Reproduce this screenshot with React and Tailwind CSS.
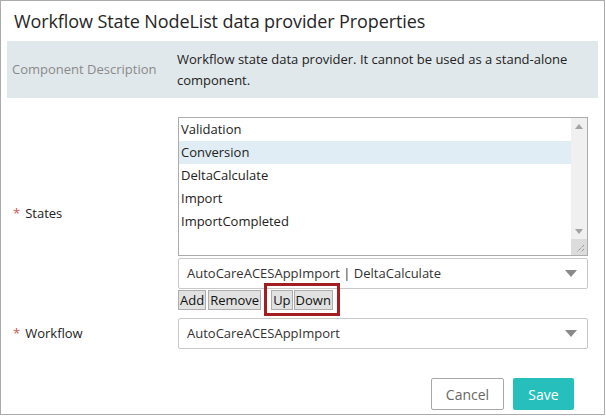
import React from "react";

const font = { fontFamily: '"Open Sans", "Noto Sans", sans-serif' };

function Caret() {
  return (
    <svg width="12" height="7" viewBox="0 0 12 7" className="shrink-0">
      <path d="M0 0 L12 0 L6 7 Z" fill="#8a8a8a" />
    </svg>
  );
}

function SelectBox({ text }) {
  return (
    <div className="flex h-[31px] items-center justify-between rounded-[2px] border border-[#c8c8c8] bg-white pl-[8px] pr-[10px] text-[13px] text-[#333]">
      <span>{text}</span>
      <Caret />
    </div>
  );
}

function GrayBtn({ children }) {
  return (
    <button className="flex h-[20px] items-center border border-[#adadad] bg-[#e1e1e1] px-[1px] text-[13px] leading-[17px] text-[#111]">
      {children}
    </button>
  );
}

export default function App() {
  const items = ["Validation", "Conversion", "DeltaCalculate", "Import", "ImportCompleted"];
  return (
    <div className="h-[416px] w-[606px] bg-white" style={font}>
      <div className="flex h-[415px] w-[605px] flex-col border border-[#ababab]">
        <div className="pl-[13px] pt-[7px] text-[18px] leading-[27px] tracking-[-0.1px] text-[#262626]">
          Workflow State NodeList data provider Properties
        </div>
        <div className="mx-[6px] mt-[6px] flex h-[57px] items-center bg-[#e1e8eb]">
          <div className="w-[170px] pl-[5px] text-[13px] text-[#8a8a8a]">Component Description</div>
          <div className="flex-1 pr-[10px] text-[13px] leading-[21px] text-[#222]">
            Workflow state data provider. It cannot be used as a stand-alone component.
          </div>
        </div>

        <div className="mt-[19px] flex items-center">
          <div className="w-[177px] pl-[12px] text-[13px] text-[#222]">
            <span className="mr-[5px] text-[#d9534f]">*</span>States
          </div>
          <div className="flex w-[410px] flex-col">
            <div className="flex h-[139px] border border-[#acacac] bg-white">
              <div className="flex-1 text-[13px] text-[#222]">
                {items.map((it, i) => (
                  <div
                    key={it}
                    className={`flex h-[23px] items-center pl-[2px] ${i === 1 ? "bg-[#e0edf4]" : ""}`}
                  >
                    {it}
                  </div>
                ))}
              </div>
              <div className="flex w-[16px] flex-col bg-[#f0f0f0]">
                <div className="flex h-[16px] items-center justify-center">
                  <svg width="8" height="5" viewBox="0 0 8 5"><path d="M0 5 L8 5 L4 0 Z" fill="#a3a3a3" /></svg>
                </div>
                <div className="flex-1" />
                <div className="flex h-[16px] items-center justify-center">
                  <svg width="8" height="5" viewBox="0 0 8 5"><path d="M0 0 L8 0 L4 5 Z" fill="#a3a3a3" /></svg>
                </div>
                <div className="flex h-[16px] items-end justify-end bg-[#dcdcdc] p-[2px]">
                  <svg width="10" height="10" viewBox="0 0 10 10">
                    <path d="M9 2 L2 9 M9 6 L6 9" stroke="#777" strokeWidth="1" strokeDasharray="1 1" />
                  </svg>
                </div>
              </div>
            </div>
            <div className="mt-[2px]">
              <SelectBox text="AutoCareACESAppImport | DeltaCalculate" />
            </div>
            <div className="mt-px flex h-[20px] items-center">
              <GrayBtn>Add</GrayBtn>
              <div className="ml-[2px] flex"><GrayBtn>Remove</GrayBtn></div>
              <div className="relative ml-[10px] flex gap-px">
                <GrayBtn>Up</GrayBtn>
                <GrayBtn>Down</GrayBtn>
                <div className="pointer-events-none absolute -bottom-[6px] -left-[7px] -right-[7px] -top-[7px] border-[3px] border-[#a31d24]" />
              </div>
            </div>
          </div>
        </div>

        <div className="mt-[8px] flex items-center">
          <div className="w-[177px] pl-[12px] text-[13px] text-[#222]">
            <span className="mr-[5px] text-[#d9534f]">*</span>Workflow
          </div>
          <div className="w-[410px]">
            <SelectBox text="AutoCareACESAppImport" />
          </div>
        </div>

        <div className="mt-auto mb-[4px] flex justify-end gap-[9px] pr-[30px]">
          <button className="h-[32px] w-[73px] rounded-[2px] border border-[#a8a8a8] bg-white text-[14px] text-[#666]">
            Cancel
          </button>
          <button className="h-[32px] w-[61px] rounded-[2px] bg-[#27bfbb] text-[14px] text-white">
            Save
          </button>
        </div>
      </div>
    </div>
  );
}
